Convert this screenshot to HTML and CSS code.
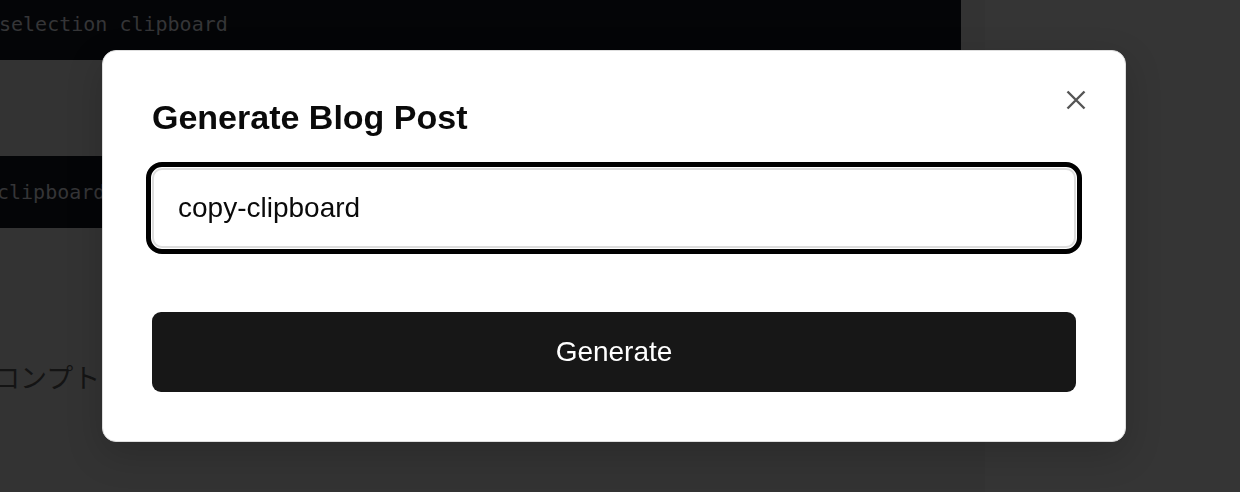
FILE: index.html
```html
<!DOCTYPE html>
<html lang="en">
<head>
<meta charset="utf-8">
<title>Generate Blog Post</title>
<link rel="stylesheet" href="styles.css">
</head>
<body>
<div class="page">
  <div class="main">
    <div class="code code-first"><span class="code-text shift-a">selection clipboard</span></div>
    <div class="code code-second"><span class="code-text shift-b">clipboard</span></div>
    <p class="jp">プロンプト</p>
  </div>
  <div class="side"></div>
</div>

<div class="modal" role="dialog" aria-labelledby="modal-title">
  <button class="close" aria-label="Close">
    <svg width="20" height="20" viewBox="0 0 20 20" aria-hidden="true">
      <path d="M1.5 1.5 L18.5 18.5 M18.5 1.5 L1.5 18.5" stroke="#555" stroke-width="2.4" fill="none"/>
    </svg>
  </button>
  <h2 class="title" id="modal-title">Generate Blog Post</h2>
  <div class="field">copy-clipboard</div>
  <button class="primary">Generate</button>
</div>
</body>
</html>
```

FILE: styles.css
```css
* { box-sizing: border-box; }

html, body {
  margin: 0;
  padding: 0;
  height: 100%;
}

body {
  background: #333333;
  font-family: "Liberation Sans", Arial, sans-serif;
  overflow: hidden;
}

.page {
  display: flex;
  height: 492px;
}

.main {
  width: 961px;
  display: flex;
  flex-direction: column;
}

.side {
  flex: 1;
  margin-left: 24px;
  background: #353535;
}

.code {
  background: #040507;
  overflow: hidden;
  white-space: nowrap;
}

.code-text {
  display: block;
  font-family: "DejaVu Sans Mono", "Liberation Mono", monospace;
  font-size: 20px;
  line-height: 24px;
  color: #353537;
}

.code-first {
  height: 60px;
  padding-top: 12px;
}

.code-second {
  height: 72px;
  margin-top: 96px;
  padding-top: 24px;
}

.shift-a { margin-left: -1px; }
.shift-b { margin-left: -3px; }

.jp {
  margin: 130px 0 0 -34px;
  font-family: "Noto Sans CJK JP", sans-serif;
  font-size: 27px;
  line-height: 38px;
  color: #141414;
  white-space: nowrap;
}

.modal {
  position: fixed;
  left: 102px;
  top: 50px;
  width: 1024px;
  background: #ffffff;
  border: 1px solid #dedede;
  border-radius: 14px;
  padding: 46px 49px 49px 49px;
  display: flex;
  flex-direction: column;
  box-shadow: 0 12px 36px rgba(0, 0, 0, 0.18);
}

.close {
  position: absolute;
  top: 35px;
  right: 35px;
  width: 28px;
  height: 28px;
  padding: 0;
  border: 0;
  background: transparent;
  display: flex;
  align-items: center;
  justify-content: center;
}

.title {
  margin: 0 0 30px 0;
  font-size: 34px;
  line-height: 1.2;
  font-weight: 700;
  color: #0a0a0a;
}

.field {
  height: 80px;
  border: 2px solid #dddddd;
  border-radius: 10px;
  outline: 5px solid #000000;
  outline-offset: 1px;
  padding: 0 24px;
  display: flex;
  align-items: center;
  font-size: 28px;
  color: #0a0a0a;
}

.primary {
  margin-top: 64px;
  height: 80px;
  border: 0;
  border-radius: 9px;
  background: #171717;
  color: #ffffff;
  font-family: "Liberation Sans", Arial, sans-serif;
  font-size: 28px;
}
```
